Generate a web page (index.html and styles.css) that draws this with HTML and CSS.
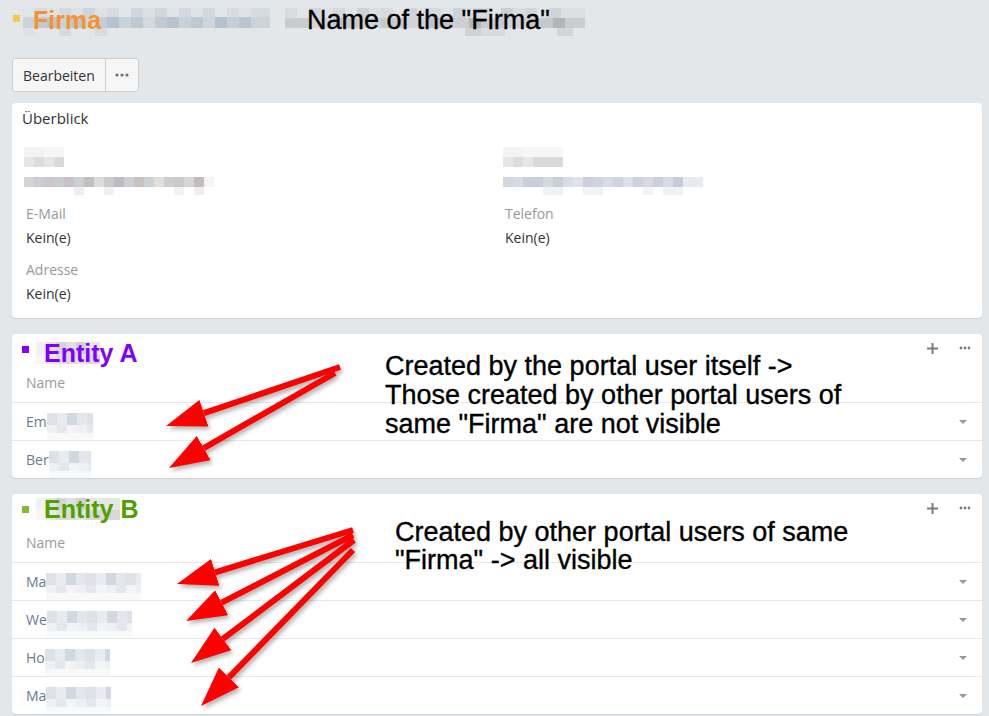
FILE: index.html
```html
<!DOCTYPE html>
<html lang="de">

<head>
	<meta charset="UTF-8">
	<meta name="viewport" content="width=device-width, initial-scale=1.0">
	<title>Firma</title>
	<link rel="stylesheet" href="styles.css">
</head>

<body>
	<div class="page">
		<div class="header">
			<span class="header-square"></span>
			<span class="blur-title"><span class="header-title">Firma</span></span>
			<span class="blur-name"><span class="header-note">Name of the "Firma"</span></span>
		</div>

		<div class="btn-group">
			<button class="btn">Bearbeiten</button>
			<button class="btn btn-more">
				<svg width="14" height="4" viewBox="0 0 14 4"><circle cx="2" cy="2" r="1.6"/><circle cx="7" cy="2" r="1.6"/><circle cx="12" cy="2" r="1.6"/></svg>
			</button>
		</div>

		<div class="panel">
			<div class="panel-heading">Überblick</div>
			<div class="overview">
				<div class="col col-left">
					<div class="field field-blur">
						<div class="blur-label"></div>
						<div class="blur-value"></div>
					</div>
					<div class="field">
						<div class="field-label">E-Mail</div>
						<div class="field-value">Kein(e)</div>
					</div>
					<div class="field">
						<div class="field-label">Adresse</div>
						<div class="field-value">Kein(e)</div>
					</div>
				</div>
				<div class="col">
					<div class="field field-blur">
						<div class="blur-label wide"></div>
						<div class="blur-value wide"></div>
					</div>
					<div class="field">
						<div class="field-label">Telefon</div>
						<div class="field-value">Kein(e)</div>
					</div>
				</div>
			</div>
		</div>

		<div class="panel">
			<div class="rel-heading">
				<span class="rel-square purple"></span>
				<span class="rel-title entity-a">Entity A</span>
				<div class="rel-actions">
					<svg width="11" height="11" viewBox="0 0 11 11"><path d="M5.5 0v11M0 5.5h11" stroke="#7b7b7b" stroke-width="2"/></svg>
					<svg width="12" height="4" viewBox="0 0 12 4"><circle cx="2" cy="2" r="1.4"/><circle cx="6" cy="2" r="1.4"/><circle cx="10" cy="2" r="1.4"/></svg>
				</div>
			</div>
			<div class="rel-head">Name</div>
			<div class="rel-row"><span class="rel-name">Em</span><span class="blur-cell w46"></span><span class="caret"></span></div>
			<div class="rel-row"><span class="rel-name">Ber</span><span class="blur-cell w42"></span><span class="caret"></span></div>
		</div>

		<div class="panel">
			<div class="rel-heading">
				<span class="rel-square green"></span>
				<span class="rel-title entity-b">Entity B</span>
				<div class="rel-actions">
					<svg width="11" height="11" viewBox="0 0 11 11"><path d="M5.5 0v11M0 5.5h11" stroke="#7b7b7b" stroke-width="2"/></svg>
					<svg width="12" height="4" viewBox="0 0 12 4"><circle cx="2" cy="2" r="1.4"/><circle cx="6" cy="2" r="1.4"/><circle cx="10" cy="2" r="1.4"/></svg>
				</div>
			</div>
			<div class="rel-head">Name</div>
			<div class="rel-row"><span class="rel-name">Ma</span><span class="blur-cell w95"></span><span class="caret"></span></div>
			<div class="rel-row"><span class="rel-name">We</span><span class="blur-cell w85"></span><span class="caret"></span></div>
			<div class="rel-row"><span class="rel-name">Ho</span><span class="blur-cell w65"></span><span class="caret"></span></div>
			<div class="rel-row"><span class="rel-name">Ma</span><span class="blur-cell w65"></span><span class="caret"></span></div>
		</div>
	</div>

	<!-- annotations laid over the screenshot -->
	<div class="note note-a">Created by the portal user itself -&gt;<br>Those created by other portal users of<br>same "Firma" are not visible</div>
	<div class="note note-b">Created by other portal users of same<br>"Firma" -&gt; all visible</div>

	<svg class="arrows" width="989" height="716" viewBox="0 0 989 716">
		<defs>
			<marker id="head" markerWidth="40" markerHeight="28" refX="0" refY="14" orient="auto" markerUnits="userSpaceOnUse">
				<path d="M0 0 L40 14 L0 28 Z" fill="#ff0000"/>
			</marker>
		</defs>
		<line x1="340" y1="367" x2="203.9" y2="413.2" marker-end="url(#head)"/>
		<line x1="335" y1="373" x2="203.7" y2="448.1" marker-end="url(#head)"/>
		<line x1="353" y1="530" x2="215.2" y2="572.3" marker-end="url(#head)"/>
		<line x1="353" y1="535" x2="221.6" y2="602.7" marker-end="url(#head)"/>
		<line x1="354" y1="540" x2="222.9" y2="638.9" marker-end="url(#head)"/>
		<line x1="353" y1="550" x2="228.9" y2="677.4" marker-end="url(#head)"/>
	</svg>
</body>

</html>
```

FILE: styles.css
```css
* {
	box-sizing: border-box;
}

body {
	margin: 0;
	background-color: #e3e7ea;
	font-family: "Open Sans", "Liberation Sans", sans-serif;
	font-size: 14px;
	color: #333;
}

.page {
	padding: 0 7px 0 12px;
}

/* header */
.header {
	display: flex;
	align-items: flex-start;
	padding-top: 8px;
}

.header-square {
	width: 7px;
	height: 7px;
	margin: 7px 3px 0 1px;
	background-color: #f2c94c;
}

.blur-title {
	width: 247px;
	height: 28px;
	padding-left: 10px;
	background:
		linear-gradient(90deg, #e0e5e9 0 12px, #d6dde2 12px 24px, #dfe4e8 24px 36px, #d2d9df 36px 48px, #dce1e6 48px 60px, #cdd5dc 60px 72px, #dde2e6 72px 84px, #d4dbe1 84px 96px, #e1e5e9 96px 108px, #d0d8de 108px 120px, #dadfe4 120px 132px, #cfd7dd 132px 144px, #e0e4e8 144px 156px, #d3d9df 156px 168px, #dde2e6 168px 180px, #d1d8de 180px 192px, #e2e6e9 192px 204px, #d6dce1 204px 216px, #dfe3e7 216px 228px, #d5dbe0 228px 247px) 0 0 / 100% 9px no-repeat,
		linear-gradient(90deg, #cbd3da 0 12px, #c0cad3 12px 24px, #b9c4ce 24px 36px, #c8d0d8 36px 48px, #bcc7d1 48px 60px, #cfd6dc 60px 72px, #c3cdd6 72px 84px, #b6c2cd 84px 96px, #cad2d9 96px 108px, #bfc9d2 108px 120px, #d3d9df 120px 132px, #c1cbd4 132px 144px, #b8c3cd 144px 156px, #c9d1d8 156px 168px, #bdc8d1 168px 180px, #ced5db 180px 192px, #b5c1cc 192px 204px, #c6cfd7 204px 216px, #bac5cf 216px 228px, #ccd3da 228px 247px) 0 9px / 100% 11px no-repeat,
		linear-gradient(90deg, #dde2e6 0 12px, #e3e7ea 12px 36px, #d3dae0 36px 48px, #e3e7ea 48px 72px, #d6dce1 72px 84px, #e3e7ea 84px 247px) 0 20px / 100% 8px no-repeat;
}

.header-title {
	font-family: "Liberation Sans", Arial, sans-serif;
	font-weight: bold;
	font-size: 25px;
	line-height: 24px;
	color: #f7932e;
}

.blur-name {
	width: 300px;
	height: 28px;
	margin-left: 15px;
	padding-left: 22px;
	white-space: nowrap;
	background:
		linear-gradient(90deg, #d9dcdf 0 12px, #e2e5e8 12px 24px, #d3d6d9 24px 36px, #dfe2e5 36px 48px, #d6d9dc 48px 60px, #e1e4e7 60px 72px, #cfd2d5 72px 84px, #dcdfe2 84px 96px, #d8dbde 96px 108px, #e3e6e9 108px 120px, #d2d5d8 120px 132px, #dde0e3 132px 144px, #d5d8db 144px 156px, #e0e3e6 156px 168px, #d0d3d6 168px 180px, #dbdee1 180px 192px, #d7dade 192px 204px, #e2e5e8 204px 216px, #cdd0d3 216px 228px, #dadde0 228px 240px, #d4d7da 240px 252px, #e1e4e7 252px 264px, #d1d4d7 264px 276px, #dcdfe2 276px 300px) 0 0 / 100% 10px no-repeat,
		linear-gradient(90deg, #c9ccce 0 24px, #d3d6d8 24px 48px, #c4c7c9 48px 72px, #cfd2d4 72px 96px, #c7cacc 96px 120px, #d1d4d6 120px 144px, #c2c5c7 144px 168px, #cdd0d2 168px 184px, #b4b6b8 184px 196px, #c9ccce 196px 220px, #d0d3d5 220px 244px, #c5c8ca 244px 268px, #b3b5b7 268px 280px, #cbced0 280px 300px) 0 10px / 100% 10px no-repeat,
		linear-gradient(90deg, #e3e7ea 0 180px, #cfd2d5 180px 196px, #d8dbde 196px 220px, #e3e7ea 220px 272px, #d3d6d9 272px 288px, #e3e7ea 288px 300px) 0 20px / 100% 8px no-repeat;
}

.header-note {
	font-family: "Liberation Sans", Arial, sans-serif;
	font-size: 27px;
	line-height: 24px;
	color: #000;
	-webkit-text-stroke: 0.35px #000;
}

/* buttons */
.btn-group {
	display: flex;
	margin-top: 22px;
	margin-bottom: 11px;
}

.btn {
	height: 34px;
	padding: 0 10px;
	border: 1px solid #ccc;
	border-radius: 3px 0 0 3px;
	background-color: #f6f6f6;
	font-family: "Open Sans", "Liberation Sans", sans-serif;
	font-size: 14px;
	color: #333;
}

.btn-more {
	width: 34px;
	margin-left: -1px;
	padding: 0;
	border-radius: 0 3px 3px 0;
	display: flex;
	align-items: center;
	justify-content: center;
}

.btn-more svg {
	fill: #6f6f6f;
}

/* panels */
.panel {
	background-color: #fff;
	border-radius: 4px;
	box-shadow: 0 1px 1px rgba(0, 0, 0, 0.1);
	margin-bottom: 16px;
}

.panel-heading {
	padding: 6px 10px;
	line-height: 18px;
	font-size: 15px;
	color: #333;
}

.overview {
	display: flex;
	padding: 14px;
}

.col-left {
	width: 479px;
}

.field {
	margin-bottom: 12px;
}

.field:last-child {
	margin-bottom: 0;
}

.field-label {
	line-height: 20px;
	color: #999;
}

.field-value {
	margin-top: 4px;
	line-height: 20px;
	color: #333;
}

.field-blur {
	margin-left: -2px;
	margin-bottom: 9px;
}

.blur-label {
	width: 40px;
	height: 20px;
	background:
		linear-gradient(90deg, #f3f3f4 0 20px, #f7f7f8 20px 40px) 0 0 / 100% 10px no-repeat,
		linear-gradient(90deg, #e6e6e8 0 10px, #dcdcde 10px 20px, #e6e6e8 20px 30px, #dadadc 30px 40px) 0 10px / 100% 10px no-repeat;
}

.blur-label.wide {
	width: 60px;
}

.blur-value {
	width: 190px;
	height: 18px;
	margin-top: 10px;
	background:
		linear-gradient(90deg, #d4d4d6 0 10px, #cccdd0 10px 20px, #cbc6cc 20px 30px, #c8ccd0 30px 40px, #cbbfc8 40px 50px, #c8d0d0 50px 60px, #c0c0c2 60px 70px, #dcdcdc 70px 80px, #cbcbcd 80px 90px, #bebcc0 90px 100px, #ccd0d4 100px 110px, #cac0c0 110px 120px, #cbd2d6 120px 130px, #e0e0dc 130px 140px, #cecece 140px 150px, #cacaca 150px 160px, #d6d6d6 160px 170px, #c0bcc0 170px 180px, #f4f4f6 180px 190px) 0 0 / 100% 10px no-repeat,
		linear-gradient(90deg, #fff 0 50px, #eeeeef 50px 60px, #fff 60px 80px, #f0f0f2 80px 90px, #fff 90px 150px, #f2f2f3 150px 160px, #fff 160px 170px, #f0eeef 170px 180px, #fff 180px 190px) 0 10px / 100% 8px no-repeat;
}

.blur-value.wide {
	width: 200px;
	background:
		linear-gradient(90deg, #d2d7de 0 10px, #d8dce2 10px 20px, #c9cfd8 20px 40px, #d5dae1 40px 50px, #c8cfd8 50px 60px, #d9dde3 60px 70px, #e0e3e8 70px 80px, #cbd1da 80px 90px, #d0d5dd 90px 100px, #d8dce3 100px 110px, #cfd4dc 110px 120px, #dde0e6 120px 130px, #cdd3db 130px 140px, #d6dae1 140px 150px, #cbd1d9 150px 160px, #d9dde3 160px 170px, #c5ccd6 170px 180px, #e8ebee 180px 200px) 0 0 / 100% 10px no-repeat,
		linear-gradient(90deg, #fff 0 40px, #f0f2f5 40px 60px, #fff 60px 80px, #f2f3f5 80px 100px, #fff 100px 140px, #f3f4f6 140px 150px, #fff 150px 160px, #f1f2f4 160px 180px, #fff 180px 200px) 0 10px / 100% 8px no-repeat;
}

/* related panels */
.rel-heading {
	display: flex;
	align-items: flex-start;
	padding: 8px 11px 6px 10px;
}

.rel-square {
	width: 7px;
	height: 7px;
	margin: 4px 7px 0 0;
}

.rel-square.purple {
	background-color: #8000ff;
}

.rel-square.green {
	background-color: #7cbd32;
}

.rel-title {
	padding-left: 8px;
	font-family: "Liberation Sans", Arial, sans-serif;
	font-weight: bold;
	font-size: 25px;
	line-height: 22px;
	white-space: nowrap;
	background:
		linear-gradient(90deg, #f1f1f1 0 10px, #e2e2e2 10px 20px, #d5d5d5 20px 30px, #e0e0e0 30px 40px, #d2d2d2 40px 50px, #e6e6e6 50px 64px) 0 0 / 64px 12px no-repeat,
		linear-gradient(90deg, #f6f6f6 0 10px, #e8e8e8 10px 20px, #dcdcdc 20px 40px, #e3e3e3 40px 50px, #d8d8d8 50px 64px) 0 12px / 64px 10px no-repeat;
}

.rel-title.entity-a {
	color: #8000ff;
}

.rel-title.entity-b {
	margin-top: -4px;
	margin-bottom: 4px;
	color: #52a000;
	background-size: 84px 12px, 84px 10px;
}

.rel-actions {
	margin-left: auto;
	height: 12px;
	display: flex;
	align-items: center;
	gap: 21px;
}

.rel-actions svg {
	fill: #7b7b7b;
}

.rel-head {
	padding: 3px 14px 9px;
	line-height: 20px;
	color: #999;
}

.rel-row {
	height: 38px;
	display: flex;
	align-items: center;
	padding: 0 15px 0 14px;
	border-top: 1px solid #e8e8e8;
}

.rel-name {
	color: #6a7a8e;
}

.blur-cell {
	align-self: flex-end;
	height: 27px;
	background:
		repeating-linear-gradient(90deg, #dde1e8 0 10px, #e8ebef 10px 20px, #d2d8e0 20px 30px, #e3e6eb 30px 40px) 0 0 / 100% 12px no-repeat,
		repeating-linear-gradient(90deg, #eef0f3 0 10px, #e4e7ec 10px 20px, #f3f4f6 20px 30px) 0 12px / 100% 8px no-repeat,
		#f8f9fb;
}

.w42 { width: 42px; }
.w46 { width: 46px; }
.w65 { width: 65px; }
.w85 { width: 85px; }
.w95 { width: 95px; }

.caret {
	margin-left: auto;
	border-left: 4px solid transparent;
	border-right: 4px solid transparent;
	border-top: 4px solid #999;
}

/* annotations */
.note {
	position: absolute;
	font-family: "Liberation Sans", Arial, sans-serif;
	font-size: 27px;
	line-height: 29px;
	color: #000;
	white-space: nowrap;
	-webkit-text-stroke: 0.35px #000;
}

.note-a {
	left: 385px;
	top: 352px;
}

.note-b {
	left: 395px;
	top: 518px;
	line-height: 28px;
}

.arrows {
	position: absolute;
	top: 0;
	left: 0;
	pointer-events: none;
	filter: drop-shadow(2px 3px 2px rgba(0, 0, 0, 0.3));
}

.arrows line {
	stroke: #ff0000;
	stroke-width: 6;
}
```
